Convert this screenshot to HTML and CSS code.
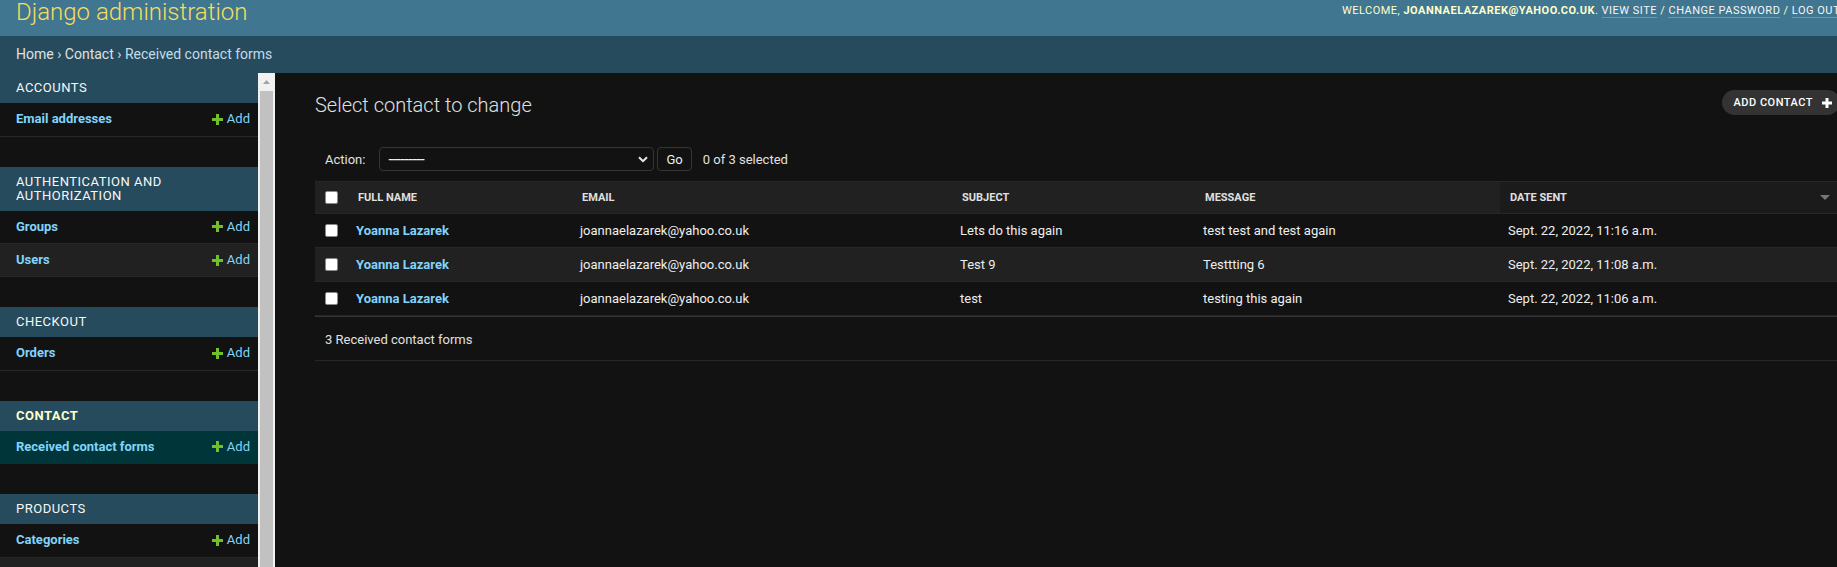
FILE: index.html
```html
<!DOCTYPE html>
<html lang="en">
<head>
<meta charset="utf-8">
<title>Select contact to change | Django site admin</title>
<link rel="stylesheet" href="styles.css">
</head>
<body>
<div class="page">
  <header class="header">
    <div class="branding">
      <h1 class="site-name"><a href="#">Django administration</a></h1>
    </div>
    <div class="user-tools">
      Welcome, <strong>joannaelazarek@yahoo.co.uk</strong>.
      <a href="#">View site</a> /
      <a href="#">Change password</a> /
      <a href="#">Log out</a>
    </div>
  </header>

  <nav class="breadcrumbs">
    <a href="#">Home</a> › <a href="#">Contact</a> › Received contact forms
  </nav>

  <div class="main">
    <aside class="sidebar">
      <div class="nav-list">
        <table class="module">
          <caption><a class="section" href="#">Accounts</a></caption>
          <tr>
            <th><a href="#">Email addresses</a></th>
            <td><a class="addlink" href="#"><svg width="11" height="11" viewBox="0 0 11 11"><path d="M4 0h3v4h4v3H7v4H4V7H0V4h4z" fill="#70bf2b"/></svg>Add</a></td>
          </tr>
        </table>

        <table class="module">
          <caption><a class="section" href="#">Authentication and Authorization</a></caption>
          <tr>
            <th><a href="#">Groups</a></th>
            <td><a class="addlink" href="#"><svg width="11" height="11" viewBox="0 0 11 11"><path d="M4 0h3v4h4v3H7v4H4V7H0V4h4z" fill="#70bf2b"/></svg>Add</a></td>
          </tr>
          <tr>
            <th><a href="#">Users</a></th>
            <td><a class="addlink" href="#"><svg width="11" height="11" viewBox="0 0 11 11"><path d="M4 0h3v4h4v3H7v4H4V7H0V4h4z" fill="#70bf2b"/></svg>Add</a></td>
          </tr>
        </table>

        <table class="module">
          <caption><a class="section" href="#">Checkout</a></caption>
          <tr>
            <th><a href="#">Orders</a></th>
            <td><a class="addlink" href="#"><svg width="11" height="11" viewBox="0 0 11 11"><path d="M4 0h3v4h4v3H7v4H4V7H0V4h4z" fill="#70bf2b"/></svg>Add</a></td>
          </tr>
        </table>

        <table class="module current-app">
          <caption><a class="section" href="#">Contact</a></caption>
          <tr class="current-model">
            <th><a href="#">Received contact forms</a></th>
            <td><a class="addlink" href="#"><svg width="11" height="11" viewBox="0 0 11 11"><path d="M4 0h3v4h4v3H7v4H4V7H0V4h4z" fill="#70bf2b"/></svg>Add</a></td>
          </tr>
        </table>

        <table class="module">
          <caption><a class="section" href="#">Products</a></caption>
          <tr>
            <th><a href="#">Categories</a></th>
            <td><a class="addlink" href="#"><svg width="11" height="11" viewBox="0 0 11 11"><path d="M4 0h3v4h4v3H7v4H4V7H0V4h4z" fill="#70bf2b"/></svg>Add</a></td>
          </tr>
          <tr>
            <th><a href="#">Products</a></th>
            <td><a class="addlink" href="#"><svg width="11" height="11" viewBox="0 0 11 11"><path d="M4 0h3v4h4v3H7v4H4V7H0V4h4z" fill="#70bf2b"/></svg>Add</a></td>
          </tr>
        </table>
      </div>
      <div class="scrollbar">
        <div class="sb-button"><svg width="7" height="4" viewBox="0 0 7 4"><path d="M3.5 0L7 4H0z" fill="#a3a3a3"/></svg></div>
        <div class="sb-thumb"></div>
      </div>
    </aside>

    <main class="content">
      <div class="title-row">
        <h1>Select contact to change</h1>
        <a class="object-add" href="#">Add contact
          <svg width="10" height="10" viewBox="0 0 10 10"><path d="M3.5 0h3v3.5H10v3H6.5V10h-3V6.5H0v-3h3.5z" fill="#ffffff"/></svg>
        </a>
      </div>

      <form class="changelist">
        <div class="actions">
          <label for="action">Action:</label>
          <div class="select-box">
            <select id="action" name="action">
              <option>---------</option>
              <option>Delete selected contacts</option>
            </select>
            <svg width="10" height="7" viewBox="0 0 10 7"><path d="M1 1.2l4 4 4-4" fill="none" stroke="#e8e8e8" stroke-width="2"/></svg>
          </div>
          <button type="button" class="go">Go</button>
          <span class="action-counter">0 of 3 selected</span>
        </div>

        <table class="result-list">
          <colgroup>
            <col class="c-check">
            <col class="c-name">
            <col class="c-email">
            <col class="c-subject">
            <col class="c-message">
            <col class="c-date">
          </colgroup>
          <thead>
            <tr>
              <th class="check-col"><input type="checkbox" class="cb"></th>
              <th><div class="text">Full name</div></th>
              <th><div class="text">Email</div></th>
              <th><div class="text">Subject</div></th>
              <th><div class="text">Message</div></th>
              <th class="sorted"><div class="text sort-text"><span>Date sent</span><svg width="10" height="5" viewBox="0 0 10 5"><path d="M0 0h10L5 5z" fill="#777"/></svg></div></th>
            </tr>
          </thead>
          <tbody>
            <tr>
              <td class="check-col"><input type="checkbox" class="cb"></td>
              <th class="name"><a href="#">Yoanna Lazarek</a></th>
              <td>joannaelazarek@yahoo.co.uk</td>
              <td>Lets do this again</td>
              <td>test test and test again</td>
              <td>Sept. 22, 2022, 11:16 a.m.</td>
            </tr>
            <tr>
              <td class="check-col"><input type="checkbox" class="cb"></td>
              <th class="name"><a href="#">Yoanna Lazarek</a></th>
              <td>joannaelazarek@yahoo.co.uk</td>
              <td>Test 9</td>
              <td>Testtting 6</td>
              <td>Sept. 22, 2022, 11:08 a.m.</td>
            </tr>
            <tr>
              <td class="check-col"><input type="checkbox" class="cb"></td>
              <th class="name"><a href="#">Yoanna Lazarek</a></th>
              <td>joannaelazarek@yahoo.co.uk</td>
              <td>test</td>
              <td>testing this again</td>
              <td>Sept. 22, 2022, 11:06 a.m.</td>
            </tr>
          </tbody>
        </table>

        <p class="paginator">3 Received contact forms</p>
      </form>
    </main>
  </div>
</div>
</body>
</html>
```

FILE: styles.css
```css
* {
  box-sizing: border-box;
}

html,
body {
  margin: 0;
  padding: 0;
  overflow: hidden;
  background: #121212;
}

body {
  font-family: Roboto, "Liberation Sans", sans-serif;
  font-size: 14px;
  color: #eeeeee;
}

a {
  text-decoration: none;
}

.page {
  width: 1880px;
}

/* Header */
.header {
  height: 36px;
  background: #417690;
  color: #ffffcc;
  display: flex;
  justify-content: space-between;
  align-items: flex-start;
  padding: 0 40px 0 16px;
  overflow: hidden;
}

.site-name {
  margin: 0;
  font-size: 24px;
  font-weight: 300;
  line-height: 24px;
}

.site-name a {
  color: #f5dd5d;
}

.user-tools {
  padding-top: 4px;
  font-size: 11px;
  line-height: 14px;
  letter-spacing: 0.5px;
  text-transform: uppercase;
  white-space: nowrap;
  color: #ffffcc;
}

.user-tools strong {
  font-weight: 700;
}

.user-tools a {
  color: #f7f7f7;
  border-bottom: 1px solid rgba(255, 255, 255, 0.25);
}

/* Breadcrumbs */
.breadcrumbs {
  background: #264b5d;
  color: #c4dce8;
  padding: 10px 16px;
  font-size: 14px;
  line-height: 17px;
}

.breadcrumbs a {
  color: #e0e0e0;
}

/* Main */
.main {
  display: flex;
  height: 494px;
}

/* Sidebar */
.sidebar {
  flex: 0 0 275px;
  display: flex;
  overflow: hidden;
}

.nav-list {
  flex: 1;
  min-width: 0;
}

.module {
  width: 100%;
  border-collapse: collapse;
  margin-bottom: 30px;
  font-size: 13px;
}

.module caption {
  background: #264b5d;
  text-align: left;
  padding: 8px 16px;
  font-size: 13px;
  line-height: 14px;
  letter-spacing: 0.5px;
  text-transform: uppercase;
}

.module caption .section {
  color: #f7f7f7;
}

.current-app caption .section {
  color: #ffffcc;
  font-weight: 700;
}

.module tr {
  border-bottom: 1px solid #272727;
}

.module tr:nth-child(even) {
  background: #212121;
}

.module tr.current-model {
  background: #00363a;
}

.module th,
.module td {
  height: 33px;
  padding: 0 8px;
  line-height: 16px;
  vertical-align: middle;
  white-space: nowrap;
}

.module th {
  text-align: left;
  padding-left: 16px;
  font-weight: 700;
}

.module th a {
  color: #81d4fa;
}

.module td {
  text-align: right;
}

.addlink {
  display: inline-flex;
  align-items: center;
  vertical-align: top;
  height: 16px;
  gap: 4px;
  color: #81d4fa;
}

/* Fake scrollbar of the sidebar */
.scrollbar {
  flex: 0 0 17px;
  background: #f1f1f1;
  display: flex;
  flex-direction: column;
}

.sb-button {
  height: 17px;
  display: flex;
  align-items: center;
  justify-content: center;
}

.sb-thumb {
  flex: 1;
  margin: 1px 2px 0;
  background: #c1c1c1;
}

/* Content */
.content {
  flex: 1;
  min-width: 0;
  padding: 20px 40px;
}

.title-row {
  display: flex;
  justify-content: space-between;
  align-items: flex-start;
  margin-bottom: 20px;
}

.title-row h1 {
  margin: 0;
  font-size: 20px;
  font-weight: 300;
  line-height: 24px;
  color: #e0e0e0;
}

.object-add {
  margin-top: -3px;
  height: 25px;
  display: flex;
  align-items: center;
  gap: 9px;
  padding: 0 8px 0 12px;
  background: #333333;
  border-radius: 15px;
  color: #ffffff;
  font-size: 11px;
  font-weight: 500;
  letter-spacing: 0.5px;
  text-transform: uppercase;
}

/* Actions */
.actions {
  display: flex;
  align-items: center;
  height: 44px;
  padding: 10px;
  font-size: 13px;
  color: #e0e0e0;
}

.actions label {
  margin-right: 14px;
}

.select-box {
  width: 275px;
  height: 24px;
  display: flex;
  align-items: center;
  padding: 0 5px 0 8px;
  border: 1px solid #353535;
  border-radius: 4px;
}

.select-box select {
  flex: 1;
  min-width: 0;
  appearance: none;
  -webkit-appearance: none;
  background: transparent;
  border: 0;
  outline: none;
  padding: 0;
  color: #eeeeee;
  font-family: Roboto, "Liberation Sans", sans-serif;
  font-size: 17px;
  letter-spacing: -0.75px;
}

.go {
  margin-left: 3px;
  height: 24px;
  padding: 0 8px;
  border: 1px solid #353535;
  border-radius: 4px;
  background: #121212;
  color: #eeeeee;
  font-family: Roboto, "Liberation Sans", sans-serif;
  font-size: 13px;
}

.action-counter {
  margin-left: 11px;
}

/* Result table */
.result-list {
  width: 1525px;
  border-collapse: collapse;
  table-layout: fixed;
  font-size: 13px;
}

.c-check { width: 33px; }
.c-name { width: 224px; }
.c-email { width: 380px; }
.c-subject { width: 243px; }
.c-message { width: 305px; }
.c-date { width: 340px; }

.result-list thead th {
  background: #212121;
  border-top: 1px solid #272727;
  border-bottom: 1px solid #272727;
  padding: 0;
  height: 32px;
  font-size: 11px;
  font-weight: 700;
  color: #e0e0e0;
  text-transform: uppercase;
  text-align: left;
  vertical-align: middle;
  white-space: nowrap;
}

.result-list thead th.sorted {
  background: #1b1b1b;
}

.result-list .text {
  padding: 0 10px;
  line-height: 15px;
}

.sort-text {
  display: flex;
  align-items: center;
  justify-content: space-between;
  padding-right: 8px;
}

.result-list tbody tr {
  border-bottom: 1px solid #272727;
}

.result-list tbody tr:nth-child(even) {
  background: #212121;
}

.result-list tbody td,
.result-list tbody th {
  height: 34px;
  padding: 0 8px;
  line-height: 17px;
  vertical-align: middle;
  text-align: left;
  color: #eeeeee;
}

.result-list tbody th.name {
  font-weight: 700;
}

.result-list tbody th.name a {
  color: #81d4fa;
}

.result-list .check-col {
  text-align: center;
  padding: 0;
}

.cb {
  appearance: none;
  -webkit-appearance: none;
  display: block;
  margin: 0 auto;
  width: 13px;
  height: 13px;
  background: #ffffff;
  border: 1px solid #8a8a8a;
  border-radius: 2px;
}

/* Paginator */
.paginator {
  width: 1525px;
  margin: 0;
  padding: 12px 10px 9px;
  font-size: 13px;
  line-height: 22px;
  color: #e0e0e0;
  border-top: 1px solid #353535;
  border-bottom: 1px solid #272727;
}
```
